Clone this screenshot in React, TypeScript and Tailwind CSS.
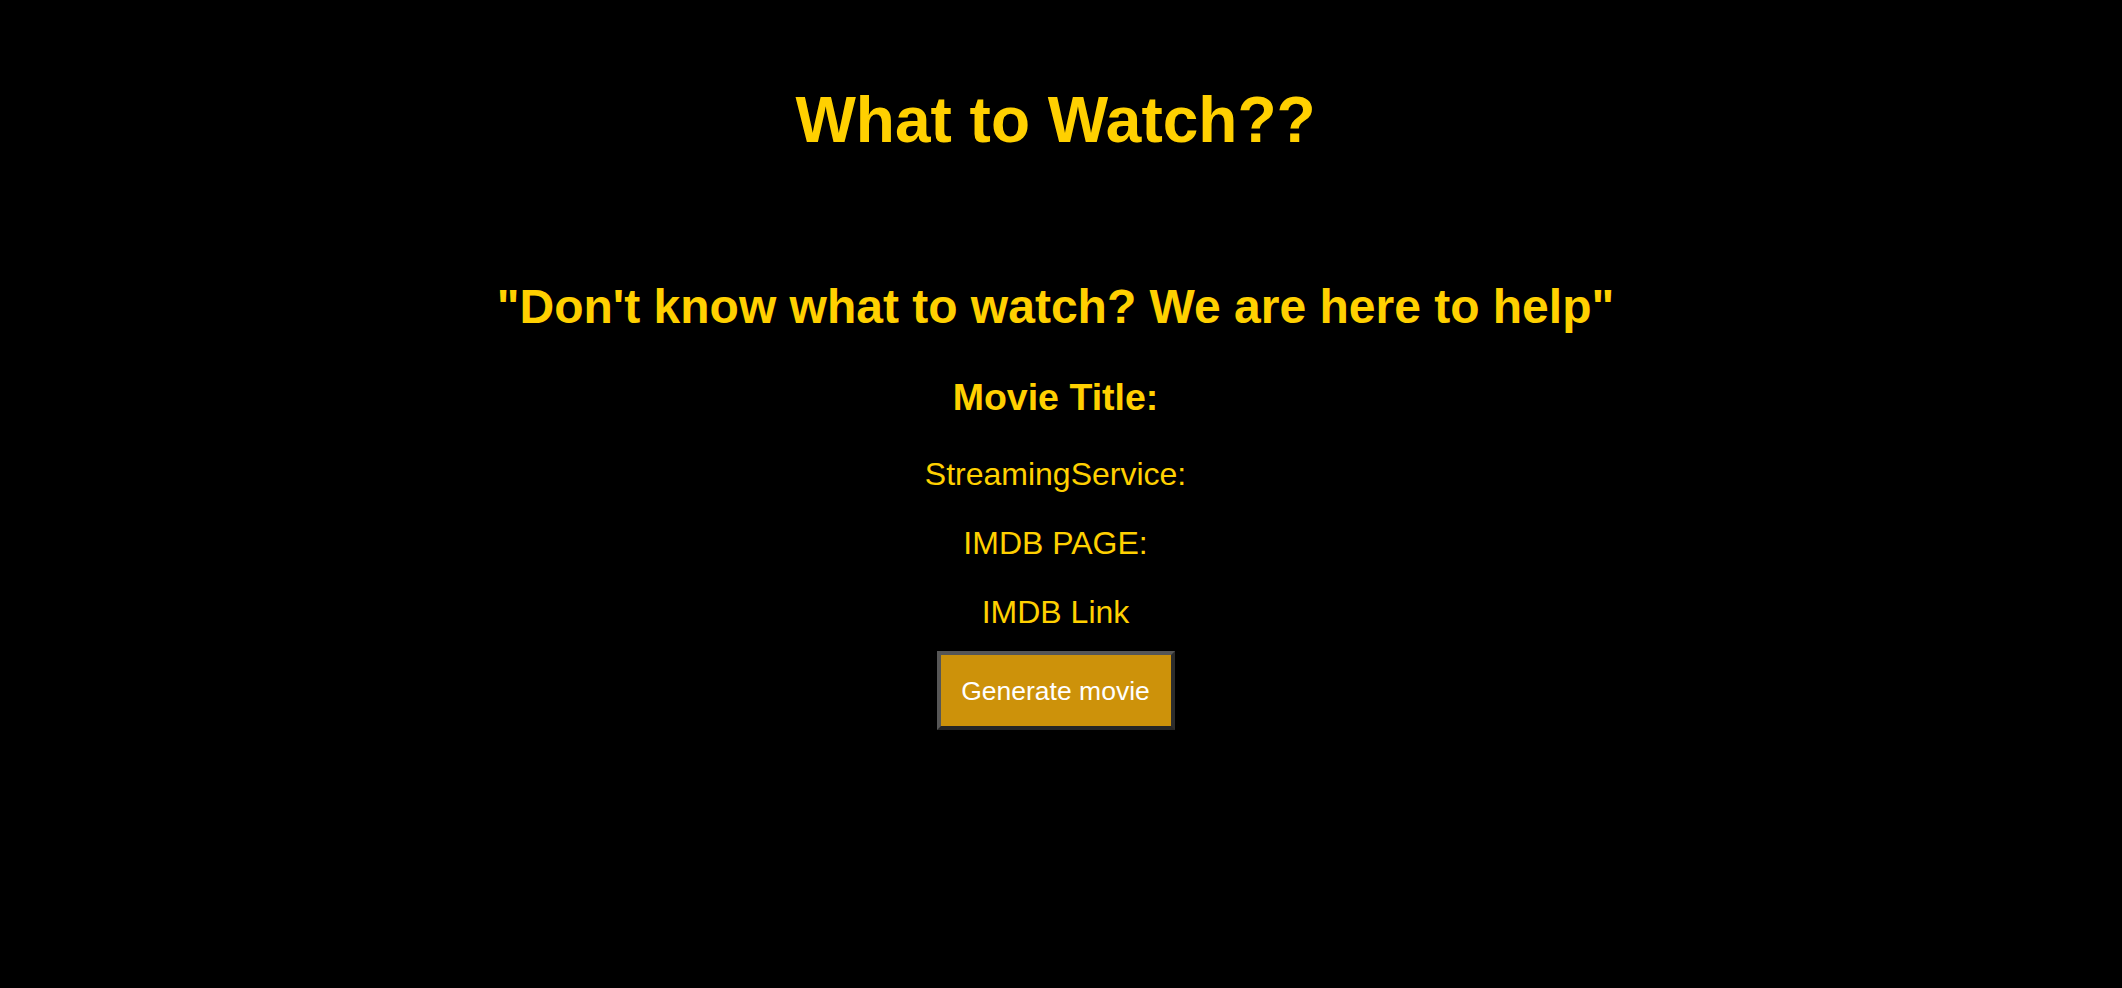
import React from "react";

export default function App() {
  return (
    <div className="min-h-[988px] w-full bg-black pr-[11px] text-center text-[#ffd000] [font-family:'Liberation_Sans',Arial,Helvetica,sans-serif]">
      <div className="flex flex-col items-center pt-[83px]">
        <h1 className="text-[64px] font-bold leading-[74px]">What to Watch??</h1>
        <h2 className="mt-[122px] text-[48px] font-bold leading-[55px]">
          "Don't know what to watch? We are here to help"
        </h2>
        <h3 className="mt-[42px] text-[37.5px] font-bold leading-[43px]">Movie Title:</h3>
        <p className="mt-[37px] text-[32px] leading-[37px]">StreamingService:</p>
        <p className="mt-[32px] text-[32px] leading-[37px]">IMDB PAGE:</p>
        <p className="mt-[32px] text-[32px] leading-[37px]">IMDB Link</p>
        <button
          type="button"
          className="mt-[20px] h-[79px] w-[238px] border-4 border-t-[#565656] border-l-[#565656] border-r-[#2c2c2c] border-b-[#252525] bg-[#cd920a] text-[26.5px] leading-[30px] text-white"
        >
          Generate movie
        </button>
      </div>
    </div>
  );
}
